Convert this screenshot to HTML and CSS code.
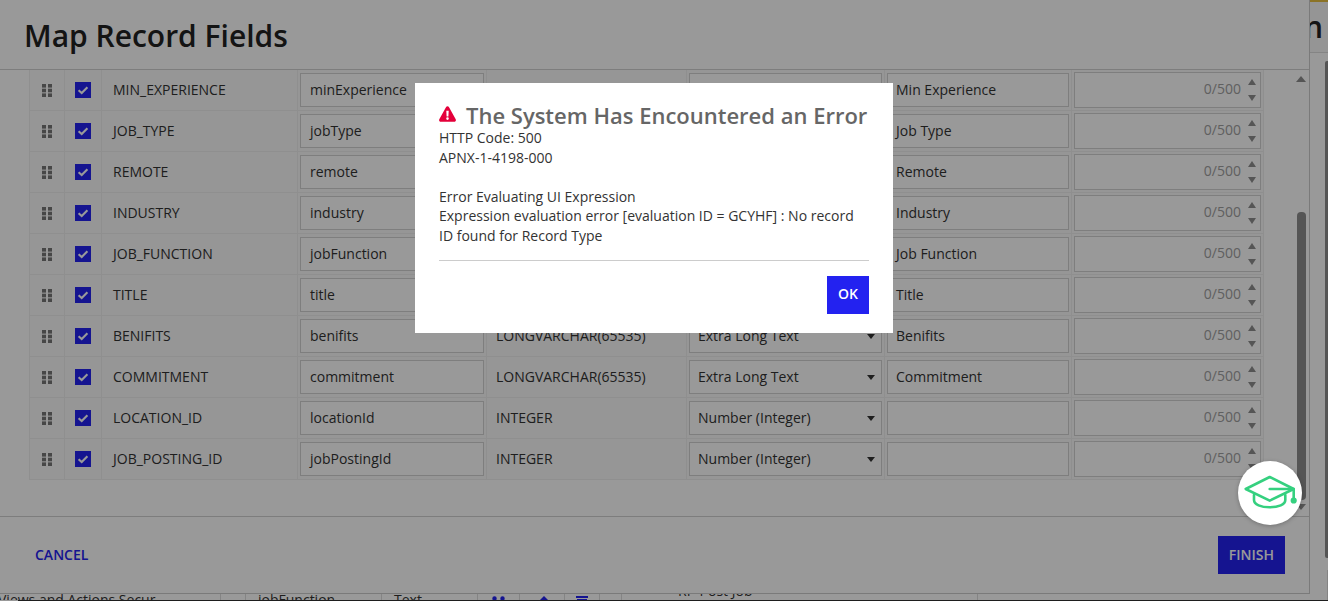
FILE: index.html
```html
<!DOCTYPE html>
<html lang="en">
<head>
  <meta charset="UTF-8">
  <title>Map Record Fields</title>
  <link rel="stylesheet" href="styles.css">
</head>
<body>

  <svg class="icon-defs" width="0" height="0">
    <symbol id="handle" viewBox="0 0 10 13">
      <rect x="0" y="0" width="4" height="3.6"/><rect x="6" y="0" width="4" height="3.6"/>
      <rect x="0" y="4.7" width="4" height="3.6"/><rect x="6" y="4.7" width="4" height="3.6"/>
      <rect x="0" y="9.4" width="4" height="3.6"/><rect x="6" y="9.4" width="4" height="3.6"/>
    </symbol>
    <symbol id="check" viewBox="0 0 16 16">
      <path d="M3.6 8.2 6.7 11 12.4 5.2" fill="none" stroke="#fff" stroke-width="2.1"/>
    </symbol>
  </svg>

  <!-- page behind the dialog -->
  <div class="page">
    <div class="page-top"><span class="page-heading">Design</span></div>
    <div class="page-side"></div>
    <div class="page-row">
      <div class="page-cell is-label">Views and Actions Secur</div>
      <div class="page-cell"></div>
      <div class="page-cell">jobFunction</div>
      <div class="page-cell">Text</div>
      <div class="page-cell is-icon">
        <svg width="13" height="12" viewBox="0 0 13 12"><circle cx="2.5" cy="2.5" r="2.2"/><circle cx="10.5" cy="2.5" r="2.2"/><circle cx="6.5" cy="9.5" r="2.2"/><path d="M2.5 2.5 6.5 9.5 10.5 2.5" fill="none" stroke="#2322f0" stroke-width="1.2"/></svg>
      </div>
      <div class="page-cell is-icon">
        <svg width="12" height="12" viewBox="0 0 12 12"><path d="M8 0 12 4 4 12H0V8z"/></svg>
      </div>
      <div class="page-cell is-icon">
        <svg width="12" height="12" viewBox="0 0 12 12"><path d="M0 0H12V2H0zM1 3H11V12H1z"/></svg>
      </div>
      <div class="page-cell"></div>
      <div class="page-cell is-raised">RP-Post Job</div>
      <div class="page-cell"></div>
    </div>
    <div class="page-edge"></div>
  </div>

  <!-- map record fields dialog -->
  <div class="dialog">
    <h1 class="dialog-title">Map Record Fields</h1>

    <div class="dialog-body">
      <div class="field-table">

        <div class="field-row">
          <div class="cell is-center"><svg class="handle"><use href="#handle"/></svg></div>
          <div class="cell is-center"><span class="checkbox"><svg><use href="#check"/></svg></span></div>
          <div class="cell is-text">MIN_EXPERIENCE</div>
          <div class="cell is-box"><div class="box is-name">minExperience</div></div>
          <div class="cell is-text"></div>
          <div class="cell is-box"><div class="box is-select"></div></div>
          <div class="cell is-box"><div class="box">Min Experience</div></div>
          <div class="cell is-box"><div class="box is-counter">0/500</div></div>
        </div>

        <div class="field-row">
          <div class="cell is-center"><svg class="handle"><use href="#handle"/></svg></div>
          <div class="cell is-center"><span class="checkbox"><svg><use href="#check"/></svg></span></div>
          <div class="cell is-text">JOB_TYPE</div>
          <div class="cell is-box"><div class="box is-name">jobType</div></div>
          <div class="cell is-text"></div>
          <div class="cell is-box"><div class="box is-select"></div></div>
          <div class="cell is-box"><div class="box">Job Type</div></div>
          <div class="cell is-box"><div class="box is-counter">0/500</div></div>
        </div>

        <div class="field-row">
          <div class="cell is-center"><svg class="handle"><use href="#handle"/></svg></div>
          <div class="cell is-center"><span class="checkbox"><svg><use href="#check"/></svg></span></div>
          <div class="cell is-text">REMOTE</div>
          <div class="cell is-box"><div class="box is-name">remote</div></div>
          <div class="cell is-text"></div>
          <div class="cell is-box"><div class="box is-select"></div></div>
          <div class="cell is-box"><div class="box">Remote</div></div>
          <div class="cell is-box"><div class="box is-counter">0/500</div></div>
        </div>

        <div class="field-row">
          <div class="cell is-center"><svg class="handle"><use href="#handle"/></svg></div>
          <div class="cell is-center"><span class="checkbox"><svg><use href="#check"/></svg></span></div>
          <div class="cell is-text">INDUSTRY</div>
          <div class="cell is-box"><div class="box is-name">industry</div></div>
          <div class="cell is-text"></div>
          <div class="cell is-box"><div class="box is-select"></div></div>
          <div class="cell is-box"><div class="box">Industry</div></div>
          <div class="cell is-box"><div class="box is-counter">0/500</div></div>
        </div>

        <div class="field-row">
          <div class="cell is-center"><svg class="handle"><use href="#handle"/></svg></div>
          <div class="cell is-center"><span class="checkbox"><svg><use href="#check"/></svg></span></div>
          <div class="cell is-text">JOB_FUNCTION</div>
          <div class="cell is-box"><div class="box is-name">jobFunction</div></div>
          <div class="cell is-text"></div>
          <div class="cell is-box"><div class="box is-select"></div></div>
          <div class="cell is-box"><div class="box">Job Function</div></div>
          <div class="cell is-box"><div class="box is-counter">0/500</div></div>
        </div>

        <div class="field-row">
          <div class="cell is-center"><svg class="handle"><use href="#handle"/></svg></div>
          <div class="cell is-center"><span class="checkbox"><svg><use href="#check"/></svg></span></div>
          <div class="cell is-text">TITLE</div>
          <div class="cell is-box"><div class="box is-name">title</div></div>
          <div class="cell is-text"></div>
          <div class="cell is-box"><div class="box is-select"></div></div>
          <div class="cell is-box"><div class="box">Title</div></div>
          <div class="cell is-box"><div class="box is-counter">0/500</div></div>
        </div>

        <div class="field-row">
          <div class="cell is-center"><svg class="handle"><use href="#handle"/></svg></div>
          <div class="cell is-center"><span class="checkbox"><svg><use href="#check"/></svg></span></div>
          <div class="cell is-text">BENIFITS</div>
          <div class="cell is-box"><div class="box is-name">benifits</div></div>
          <div class="cell is-text">LONGVARCHAR(65535)</div>
          <div class="cell is-box"><div class="box is-select">Extra Long Text</div></div>
          <div class="cell is-box"><div class="box">Benifits</div></div>
          <div class="cell is-box"><div class="box is-counter">0/500</div></div>
        </div>

        <div class="field-row">
          <div class="cell is-center"><svg class="handle"><use href="#handle"/></svg></div>
          <div class="cell is-center"><span class="checkbox"><svg><use href="#check"/></svg></span></div>
          <div class="cell is-text">COMMITMENT</div>
          <div class="cell is-box"><div class="box is-name">commitment</div></div>
          <div class="cell is-text">LONGVARCHAR(65535)</div>
          <div class="cell is-box"><div class="box is-select">Extra Long Text</div></div>
          <div class="cell is-box"><div class="box">Commitment</div></div>
          <div class="cell is-box"><div class="box is-counter">0/500</div></div>
        </div>

        <div class="field-row">
          <div class="cell is-center"><svg class="handle"><use href="#handle"/></svg></div>
          <div class="cell is-center"><span class="checkbox"><svg><use href="#check"/></svg></span></div>
          <div class="cell is-text">LOCATION_ID</div>
          <div class="cell is-box"><div class="box is-name">locationId</div></div>
          <div class="cell is-text">INTEGER</div>
          <div class="cell is-box"><div class="box is-select">Number (Integer)</div></div>
          <div class="cell is-box"><div class="box"></div></div>
          <div class="cell is-box"><div class="box is-counter">0/500</div></div>
        </div>

        <div class="field-row">
          <div class="cell is-center"><svg class="handle"><use href="#handle"/></svg></div>
          <div class="cell is-center"><span class="checkbox"><svg><use href="#check"/></svg></span></div>
          <div class="cell is-text">JOB_POSTING_ID</div>
          <div class="cell is-box"><div class="box is-name">jobPostingId</div></div>
          <div class="cell is-text">INTEGER</div>
          <div class="cell is-box"><div class="box is-select">Number (Integer)</div></div>
          <div class="cell is-box"><div class="box"></div></div>
          <div class="cell is-box"><div class="box is-counter">0/500</div></div>
        </div>

      </div>

      <div class="scrollbar">
        <span class="scroll-up"></span>
        <span class="scroll-thumb"></span>
        <span class="scroll-down"></span>
      </div>
    </div>

    <div class="dialog-footer">
      <a class="link-button">CANCEL</a>
      <button type="button" class="button">FINISH</button>
    </div>
  </div>

  <div class="overlay"></div>

  <!-- error message -->
  <div class="error">
    <h2 class="error-title">
      <svg class="error-icon" width="17" height="16" viewBox="0 0 17 16"><path fill="#e4003a" fill-rule="evenodd" d="M8.5.3c.6 0 1.1.3 1.4.8l6.8 12.2c.6 1.1-.1 2.4-1.4 2.4H1.7C.4 15.700-.3 14.400.3 13.300L7.100 1.100C7.400.6 7.900.3 8.500.3zM7.300 4.800l.3 5.600h1.800l.3-5.600zM8.500 11.300a1.300 1.300 0 1 0 0 2.600 1.300 1.300 0 0 0 0-2.600z"/></svg>
      The System Has Encountered an Error
    </h2>
    <p class="error-text">HTTP Code: 500<br>APNX-1-4198-000<br><br>Error Evaluating UI Expression<br>Expression evaluation error [evaluation ID = GCYHF] : No record ID found for Record Type</p>
    <div class="error-footer">
      <button type="button" class="button is-ok">OK</button>
    </div>
  </div>

  <div class="help-bubble">
    <svg width="64" height="64" viewBox="0 0 64 64" fill="none" stroke="#35d07f" stroke-width="2.6" stroke-linejoin="round" stroke-linecap="round">
      <path d="M31.700 16 7.700 28 31.700 39.700 55.700 28z"/>
      <path d="M31.700 28H55.700V39"/>
      <path d="M16 34V39C16 43.500 23 46.300 31.700 46.300S47.300 43.500 47.300 39V34"/>
      <circle cx="55.700" cy="39.500" r="1.800" fill="#35d07f"/>
    </svg>
  </div>

</body>
</html>
```

FILE: styles.css
```css
html, body {
  height: 100%;
}
body {
  margin: 0;
  overflow: hidden;
  font-family: "Open Sans", "Liberation Sans", sans-serif;
  font-size: 14px;
  color: #333;
  background: #fff;
}
.icon-defs {
  position: absolute;
}

/* page behind */
.page {
  display: flex;
  flex-direction: column;
  height: 100%;
  overflow: hidden;
}
.page-top {
  display: flex;
  justify-content: flex-end;
  align-items: center;
  height: 50px;
  padding-right: 5px;
  border-top: 2px solid #e8c040;
  border-bottom: 1px solid #ddd;
  background: #f8f8f8;
}
.page-heading {
  font-size: 30px;
  font-weight: 600;
  line-height: 50px;
  color: #222;
}
.page-side {
  flex: 1;
  align-self: flex-end;
  width: 3px;
  margin: 8px 0 12px;
  border-radius: 2px 0 0 2px;
  background: #8e8e8e;
}
.page-row {
  display: grid;
  grid-template-columns: 221px 25px 136px 96px 42px 45px 35px 22px 356px 1fr;
  height: 30px;
  overflow: hidden;
  flex-shrink: 0;
}
.page-cell {
  padding: 20px 0 0 12px;
  border-right: 1px solid #ddd;
  line-height: 20px;
  white-space: nowrap;
  overflow: hidden;
}
.page-cell.is-label {
  padding-left: 0;
  margin-left: -2px;
}
.page-cell.is-icon {
  padding: 23px 0 0;
  text-align: center;
  fill: #2322f0;
}
.page-cell.is-raised {
  padding: 11px 0 0 56px;
}
.page-edge {
  flex-shrink: 0;
  height: 1px;
  margin-left: 18px;
  background: #333;
}

/* dialog */
.dialog {
  position: fixed;
  top: 0;
  left: 0;
  display: flex;
  flex-direction: column;
  width: 1309px;
  height: 593px;
  border-right: 1px solid #ccc;
  border-bottom: 1px solid #ccc;
  background: #fff;
}
.dialog-title {
  flex-shrink: 0;
  height: 69px;
  margin: 0;
  padding-left: 24px;
  border-bottom: 1px solid #d0d0d0;
  font-size: 30px;
  font-weight: 600;
  line-height: 71px;
  color: #222;
}
.dialog-body {
  display: flex;
  flex: 1;
  min-height: 0;
  padding-left: 29px;
  overflow: hidden;
}
.field-table {
  flex-shrink: 0;
  width: 1235px;
}
.field-row {
  display: grid;
  grid-template-columns: 35px 37px 196px 189px 200px 198px 187px 193px;
  height: 41px;
  border-bottom: 1px solid #eee;
  box-sizing: border-box;
  background: #fafafa;
}
.cell {
  display: flex;
  align-items: center;
  min-width: 0;
  border-left: 1px solid #eee;
  white-space: nowrap;
}
.cell:last-child {
  border-right: 1px solid #eee;
}
.cell.is-center {
  justify-content: center;
}
.cell.is-text {
  padding: 0 0 2px 9px;
}
.cell.is-box {
  padding: 0 2px;
}
.cell:nth-child(3).is-text {
  padding-left: 11px;
}
.handle {
  width: 10px;
  height: 13px;
  fill: #777;
}
.checkbox {
  display: block;
  width: 16px;
  height: 16px;
  background: #2322f0;
}
.checkbox svg {
  display: block;
  width: 16px;
  height: 16px;
}
.box {
  position: relative;
  width: 100%;
  height: 34px;
  padding: 0 8px;
  border: 1px solid #d2d2d2;
  box-sizing: border-box;
  background: #fff;
  line-height: 32px;
}
.box.is-name {
  padding-left: 9px;
}
.box.is-select::after {
  content: "";
  position: absolute;
  top: 14px;
  right: 6px;
  border-top: 5px solid #333;
  border-left: 4.500px solid transparent;
  border-right: 4.500px solid transparent;
}
.box.is-counter {
  height: 36px;
  padding-right: 19px;
  line-height: 32px;
  text-align: right;
  color: #a0a0a0;
}
.box.is-counter::before,
.box.is-counter::after {
  content: "";
  position: absolute;
  right: 4px;
  border-left: 4.500px solid transparent;
  border-right: 4.500px solid transparent;
}
.box.is-counter::before {
  top: 6px;
  border-bottom: 6px solid #8e8e8e;
}
.box.is-counter::after {
  bottom: 6px;
  border-top: 6px solid #8e8e8e;
}

/* scrollbar */
.scrollbar {
  display: flex;
  flex-direction: column;
  align-items: center;
  width: 12px;
  margin-left: 31px;
  padding-top: 6px;
}
.scroll-up,
.scroll-down {
  flex-shrink: 0;
  border-left: 5px solid transparent;
  border-right: 5px solid transparent;
}
.scroll-up {
  border-bottom: 6px solid #8e8e8e;
}
.scroll-down {
  border-top: 6px solid #8e8e8e;
}
.scroll-thumb {
  flex-shrink: 0;
  width: 9px;
  height: 288px;
  margin: 130px 0 4px;
  border-radius: 4px;
  background: #8e8e8e;
}

.dialog-footer {
  display: flex;
  flex-shrink: 0;
  justify-content: space-between;
  align-items: center;
  height: 76px;
  padding: 0 24px 0 35px;
  border-top: 1px solid #d0d0d0;
}
.link-button {
  padding-bottom: 2px;
  font-weight: 600;
  color: #2322f0;
}
.button {
  height: 38px;
  padding: 0 11px 2px;
  border: 0;
  font-family: inherit;
  font-size: 14px;
  font-weight: 600;
  color: #fff;
  background: #2322f0;
}

.overlay {
  position: fixed;
  top: 0;
  right: 0;
  bottom: 0;
  left: 0;
  background: rgba(0, 0, 0, 0.4);
}

/* error message */
.error {
  position: fixed;
  top: 83px;
  left: 415px;
  width: 430px;
  padding: 17px 24px 19px;
  background: #fff;
}
.error-title {
  display: flex;
  align-items: center;
  gap: 10px;
  height: 28px;
  margin: 0;
  padding-top: 2px;
  box-sizing: border-box;
  font-size: 22px;
  font-weight: 600;
  line-height: 28px;
  white-space: nowrap;
  color: #666;
}
.error-icon {
  margin-top: -2px;
}
.error-text {
  margin: 0 0 14px;
  line-height: 19.600px;
}
.error-footer {
  display: flex;
  justify-content: flex-end;
  padding-top: 15px;
  border-top: 1px solid #ccc;
}
.button.is-ok {
  width: 42px;
  padding: 0 0 2px;
}

.help-bubble {
  position: fixed;
  top: 461px;
  left: 1238px;
  width: 64px;
  height: 64px;
  border-radius: 50%;
  background: #fff;
  box-shadow: 0 1px 4px rgba(0, 0, 0, 0.25);
}
.help-bubble svg {
  display: block;
}
```
